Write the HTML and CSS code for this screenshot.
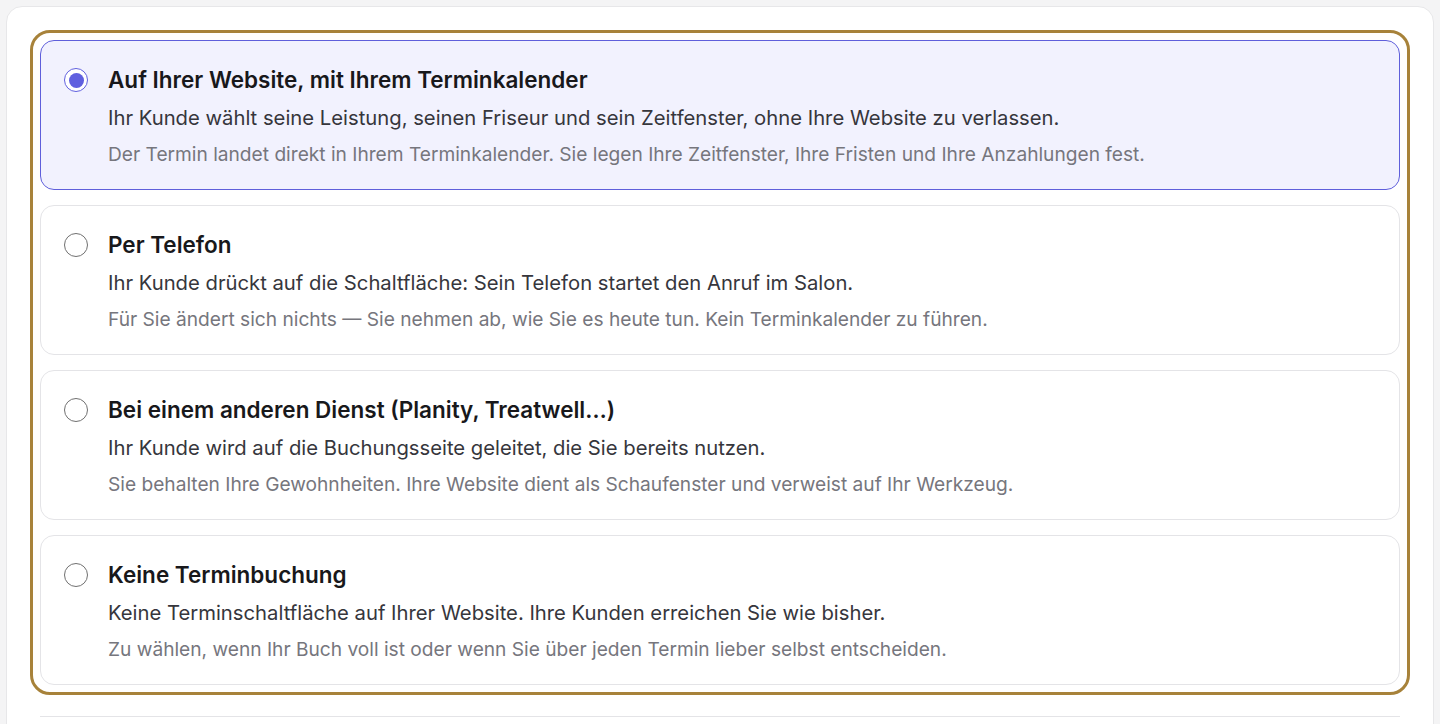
FILE: index.html
```html
<!DOCTYPE html>
<html lang="de">
<head>
    <meta charset="UTF-8">
    <meta name="viewport" content="width=device-width, initial-scale=1.0">
    <title>Terminbuchung</title>
    <link rel="stylesheet" href="styles.css">
</head>
<body>
    <div class="panel">
        <div class="options">
            <label class="option selected">
                <span class="radio"></span>
                <span class="text">
                    <span class="title">Auf Ihrer Website, mit Ihrem Terminkalender</span>
                    <span class="desc">Ihr Kunde wählt seine Leistung, seinen Friseur und sein Zeitfenster, ohne Ihre Website zu verlassen.</span>
                    <span class="note">Der Termin landet direkt in Ihrem Terminkalender. Sie legen Ihre Zeitfenster, Ihre Fristen und Ihre Anzahlungen fest.</span>
                </span>
            </label>
            <label class="option">
                <span class="radio"></span>
                <span class="text">
                    <span class="title">Per Telefon</span>
                    <span class="desc">Ihr Kunde drückt auf die Schaltfläche: Sein Telefon startet den Anruf im Salon.</span>
                    <span class="note">Für Sie ändert sich nichts — Sie nehmen ab, wie Sie es heute tun. Kein Terminkalender zu führen.</span>
                </span>
            </label>
            <label class="option">
                <span class="radio"></span>
                <span class="text">
                    <span class="title">Bei einem anderen Dienst (Planity, Treatwell…)</span>
                    <span class="desc">Ihr Kunde wird auf die Buchungsseite geleitet, die Sie bereits nutzen.</span>
                    <span class="note">Sie behalten Ihre Gewohnheiten. Ihre Website dient als Schaufenster und verweist auf Ihr Werkzeug.</span>
                </span>
            </label>
            <label class="option">
                <span class="radio"></span>
                <span class="text">
                    <span class="title">Keine Terminbuchung</span>
                    <span class="desc">Keine Terminschaltfläche auf Ihrer Website. Ihre Kunden erreichen Sie wie bisher.</span>
                    <span class="note">Zu wählen, wenn Ihr Buch voll ist oder wenn Sie über jeden Termin lieber selbst entscheiden.</span>
                </span>
            </label>
        </div>
        <div class="divider"></div>
    </div>
</body>
</html>
```

FILE: styles.css
```css
body {
    margin: 0;
    padding: 6px;
    background-color: #f4f4f5;
    font-family: Inter, "Noto Sans", sans-serif;
}
.panel {
    background-color: #fff;
    border: 1px solid #e7e7e9;
    border-radius: 16px;
    padding: 33px 33px 0;
    height: 800px;
}
.options {
    display: flex;
    flex-direction: column;
    gap: 15px;
    outline: 3px solid #a7823a;
    outline-offset: 7px;
    border-radius: 10px;
}
.option {
    display: flex;
    align-items: flex-start;
    gap: 20px;
    padding: 25px 23px 23px;
    border: 1px solid #e4e4e7;
    border-radius: 14px;
    background-color: #fff;
    cursor: pointer;
}
.option.selected {
    background-color: #f2f2fe;
    border-color: #5f5fdb;
}
.radio {
    flex: none;
    width: 24px;
    height: 24px;
    margin-top: 2px;
    box-sizing: border-box;
    border: 1.5px solid #707070;
    border-radius: 50%;
    display: flex;
    justify-content: center;
    align-items: center;
}
.selected .radio {
    border: 1.5px solid #6060df;
    background-color: #fff;
}
.selected .radio::after {
    content: "";
    width: 15px;
    height: 15px;
    border-radius: 50%;
    background-color: #6060df;
}
.text {
    display: flex;
    flex-direction: column;
    gap: 10px;
}
.title {
    font-size: 22.5px;
    line-height: 28px;
    font-weight: 600;
    color: #18181b;
}
.desc {
    font-size: 20.25px;
    line-height: 28px;
    color: #36363c;
}
.note {
    font-size: 19.15px;
    line-height: 24px;
    color: #76767d;
}
.divider {
    margin-top: 31px;
    border-top: 1px solid #e4e4e7;
}
```
